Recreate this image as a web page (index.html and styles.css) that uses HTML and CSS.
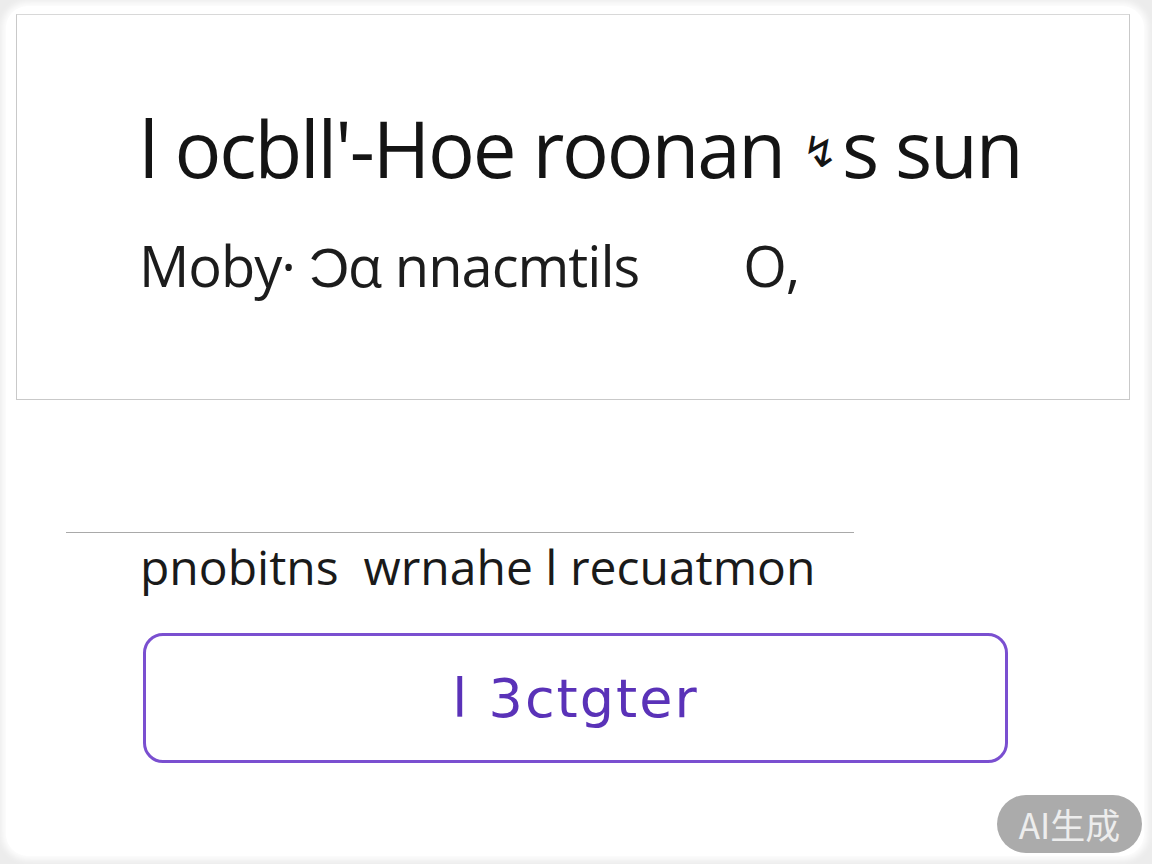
FILE: index.html
```html
<!DOCTYPE html>
<html lang="en">
<head>
<meta charset="utf-8">
<title>Dialog</title>
<link rel="stylesheet" href="styles.css">
</head>
<body>
<div class="frame">
  <div class="card">
    <section class="top-box">
      <h1 class="title">l ocbll'-Hoe roonan <span class="glyph">↯</span>s sun</h1>
      <p class="subtitle"><span>Moby· Ͻα nnacmtils</span><span class="sub-o">O,</span></p>
    </section>
    <div class="lower">
      <hr class="divider">
      <p class="note">pnobitns&nbsp; wrnahe l recuatmon</p>
      <button class="action">l 3ctgter</button>
    </div>
  </div>
  <div class="badge">AI生成</div>
</div>
</body>
</html>
```

FILE: styles.css
```css
html, body {
  margin: 0;
  padding: 0;
  background: #ececec;
}
.frame {
  width: 1152px;
  height: 864px;
  box-sizing: border-box;
  padding: 6px 8px 8px 6px;
  position: relative;
  font-family: "Open Sans", "Noto Sans", sans-serif;
}
.card {
  height: 100%;
  background: #ffffff;
  border-radius: 22px;
  box-shadow: 0 0 6px 4px rgba(255,255,255,0.9);
  padding: 8px 14px 0 10px;
  box-sizing: border-box;
}
.top-box {
  height: 386px;
  box-sizing: border-box;
  border: 1px solid #c9c9c9;
  border-top-color: #d8d8d8;
  padding: 85px 0 0 122px;
}
.title {
  margin: 0;
  font-family: "Open Sans", sans-serif;
  font-weight: 400;
  font-size: 78px;
  line-height: 96px;
  color: #141414;
  letter-spacing: -2.2px;
  word-spacing: 0;
  white-space: nowrap;
}
.glyph {
  font-size: 0.55em;
  font-weight: 400;
  letter-spacing: 4px;
  vertical-align: 0.25em;
}
.subtitle {
  margin: 34px 0 0;
  font-family: "Open Sans", sans-serif;
  font-size: 56px;
  line-height: 64px;
  color: #1c1c1c;
  display: flex;
  gap: 104px;
  white-space: nowrap;
  letter-spacing: -1px;
}
.lower {
  padding: 132px 0 0 50px;
}
.divider {
  margin: 0;
  width: 788px;
  border: 0;
  border-top: 1px solid #a9a9a9;
}
.note {
  margin: 4px 0 0 74px;
  font-family: "Open Sans", sans-serif;
  font-size: 48px;
  line-height: 60px;
  color: #1a1a1a;
  white-space: nowrap;
  letter-spacing: 0;
}
.action {
  display: block;
  margin: 36px 0 0 77px;
  width: 865px;
  height: 130px;
  border: 3px solid #7a4fd0;
  border-radius: 20px;
  background: #ffffff;
  color: #5a32b8;
  font-family: "DejaVu Sans", sans-serif;
  font-size: 54px;
  letter-spacing: 2px;
  padding: 0;
}
.badge {
  position: absolute;
  left: 997px;
  top: 795px;
  width: 145px;
  height: 58px;
  border-radius: 29px;
  background: #ababab;
  color: #ededed;
  font-family: "Noto Sans CJK SC", sans-serif;
  font-size: 35px;
  line-height: 58px;
  text-align: center;
}
```
